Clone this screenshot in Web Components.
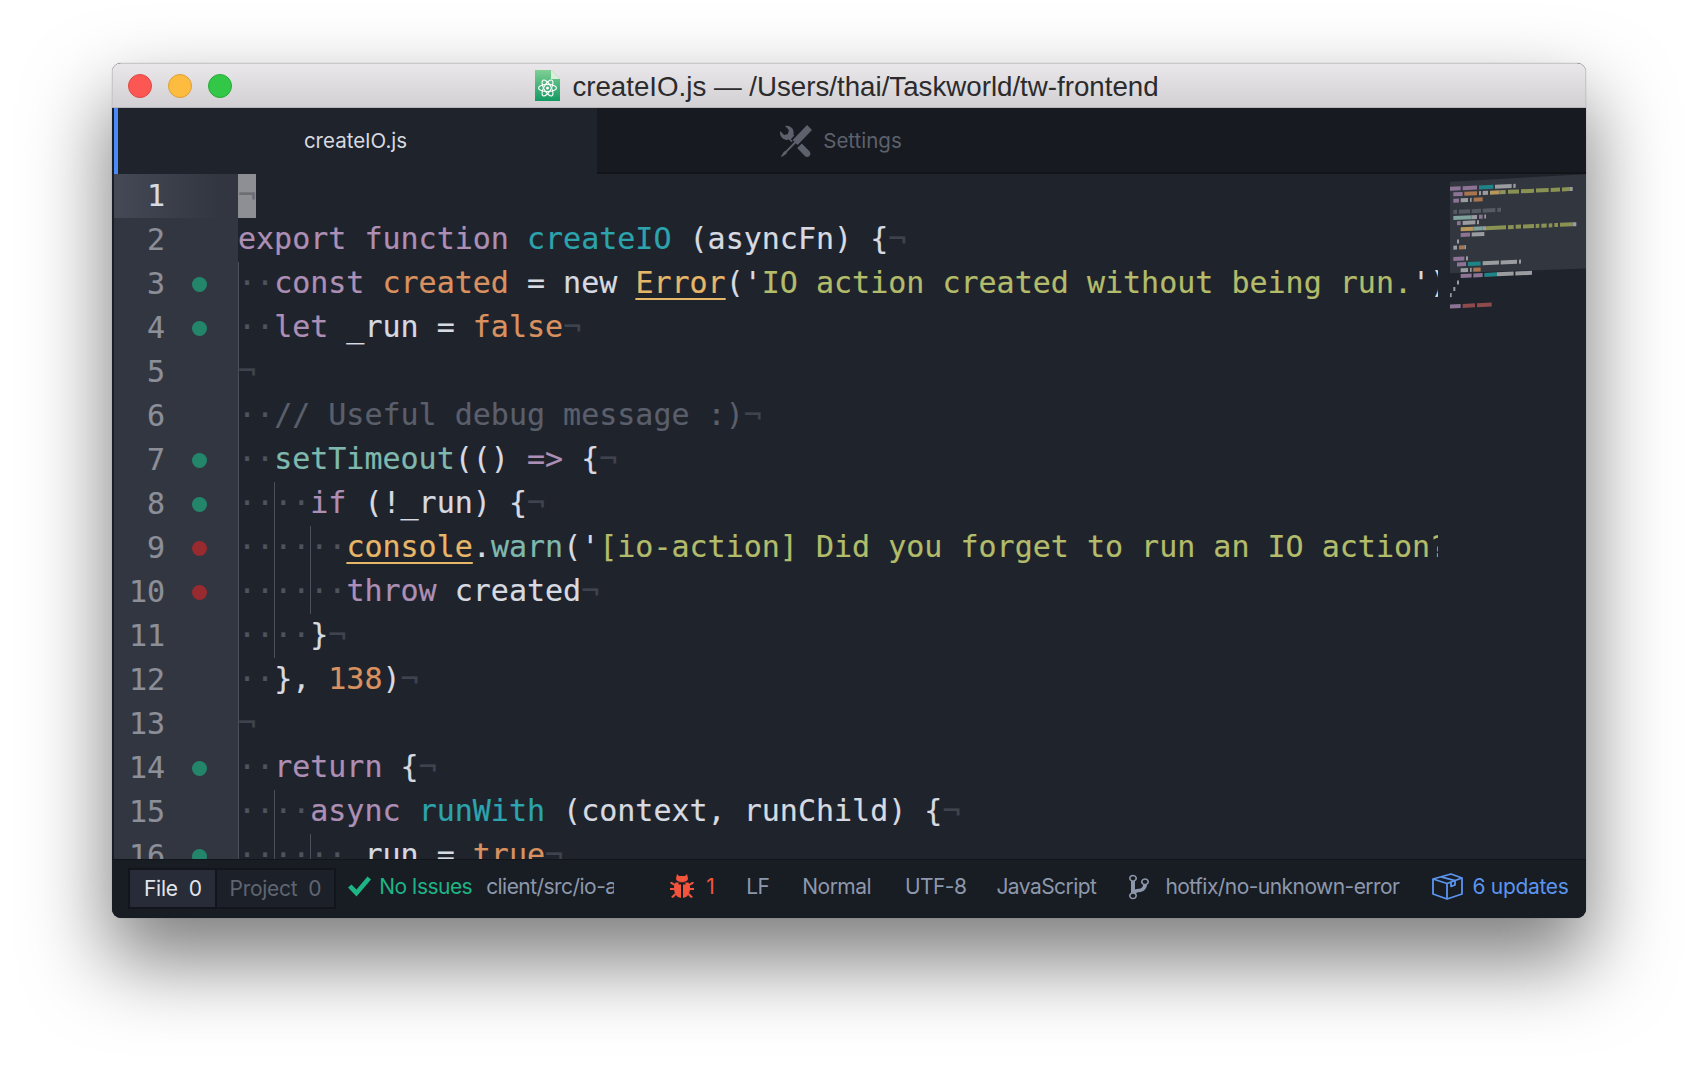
<!DOCTYPE html>
<html>
<head>
<meta charset="utf-8">
<title>createIO.js</title>
<style>
    html, body { margin: 0; height: 100%; background: #fff; overflow: hidden; }
    body { padding: 63px 0 0 112px; box-sizing: border-box; font-family: Inter, "Liberation Sans", sans-serif; }
</style>
</head>
<body>
<app-window>
    <title-bar slot="title">createIO.js — /Users/thai/Taskworld/tw-frontend</title-bar>
    <tab-bar slot="tabs">
        <tab-item active>createIO.js</tab-item>
        <tab-item icon>Settings</tab-item>
    </tab-bar>
    <text-editor slot="editor"></text-editor>
    <status-bar slot="status"></status-bar>
</app-window>

<script>
class AppWindow extends HTMLElement {
    constructor() {
        super();
        this.attachShadow({ mode: 'open' });
        this.shadowRoot.innerHTML = `
            <style>
                :host {
                    display: flex;
                    flex-direction: column;
                    width: 1474px;
                    height: 855px;
                    border-radius: 9px;
                    overflow: hidden;
                    background: #1f232c;
                    box-shadow: 0 40px 80px 4px rgba(0, 0, 0, 0.5), 0 0 1px rgba(0, 0, 0, 0.4);
                }
            </style>
            <slot name="title"></slot>
            <slot name="tabs"></slot>
            <slot name="editor"></slot>
            <slot name="status"></slot>
        `;
    }
}

class TitleBar extends HTMLElement {
    constructor() {
        super();
        this.attachShadow({ mode: 'open' });
        this.shadowRoot.innerHTML = `
            <style>
                :host {
                    display: flex;
                    position: relative;
                    flex: none;
                    height: 45px;
                    box-sizing: border-box;
                    align-items: center;
                    justify-content: center;
                    background: linear-gradient(#e9e7e9, #d2d0d2);
                    border-top: 1px solid #c9c8c9;
                    border-bottom: 1px solid #b8b6b8;
                    box-shadow: inset 1px 0 0 #c9c8c9, inset -1px 0 0 #c9c8c9;
                    color: #2b2b2d;
                    font: 27.7px "Liberation Sans", Arial, sans-serif;
                }
                .lights {
                    position: absolute;
                    left: 16px;
                    top: 10px;
                    display: flex;
                    gap: 16px;
                }
                .lights i {
                    width: 24px;
                    height: 24px;
                    border-radius: 50%;
                    box-sizing: border-box;
                }
                .close { background: #fc5753; border: 1px solid #df4744; }
                .min { background: #fdbc40; border: 1px solid #de9f34; }
                .max { background: #33c748; border: 1px solid #27aa35; }
                .inner { display: flex; align-items: center; gap: 12px; margin-left: -4px; }
                .text { position: relative; top: 1px; }
                svg { display: block; }
            </style>
            <div class="lights"><i class="close"></i><i class="min"></i><i class="max"></i></div>
            <div class="inner">
                <svg width="25" height="31" viewBox="0 0 25 31">
                    <defs>
                        <linearGradient id="doc" x1="0" y1="0" x2="0" y2="1">
                            <stop offset="0" stop-color="#7fcf94"/>
                            <stop offset="1" stop-color="#139a63"/>
                        </linearGradient>
                    </defs>
                    <path d="M0 0H16L25 9V31H0Z" fill="url(#doc)"/>
                    <path d="M16 0L25 9H16Z" fill="#d9efdc"/>
                    <g fill="none" stroke="#fff" stroke-width="1.1">
                        <ellipse cx="12.5" cy="18" rx="9" ry="3.6"/>
                        <ellipse cx="12.5" cy="18" rx="9" ry="3.6" transform="rotate(60 12.5 18)"/>
                        <ellipse cx="12.5" cy="18" rx="9" ry="3.6" transform="rotate(120 12.5 18)"/>
                    </g>
                    <circle cx="12.5" cy="18" r="1.5" fill="#fff"/>
                </svg>
                <span class="text"><slot></slot></span>
            </div>
        `;
    }
}

class TabBar extends HTMLElement {
    constructor() {
        super();
        this.attachShadow({ mode: 'open' });
        this.shadowRoot.innerHTML = `
            <style>
                :host {
                    display: flex;
                    flex: none;
                    height: 66px;
                    background: #171a21;
                    border-left: 2px solid #1a1d24;
                    box-shadow: inset 0 -2px 0 #12141a;
                }
            </style>
            <slot></slot>
        `;
    }
}

class TabItem extends HTMLElement {
    constructor() {
        super();
        this.attachShadow({ mode: 'open' });
        this.shadowRoot.innerHTML = `
            <style>
                :host {
                    display: flex;
                    width: 485px;
                    box-sizing: border-box;
                    align-items: center;
                    justify-content: center;
                    gap: 11px;
                    padding: 0 0 1px 3px;
                    color: #5d616c;
                    font-size: 20.5px;
                }
                :host([active]) {
                    width: 483px;
                    padding: 0 0 2px;
                    background: #1f232c;
                    color: #d7dae0;
                    box-shadow: inset 4px 0 0 #4a8cf7;
                }
                svg { display: none; }
                :host([icon]) svg { display: block; }
            </style>
            <svg width="32" height="32" viewBox="0 0 16 16" fill="#5d616c">
                <path d="M4.48 7.27c.26.26 1.28 1.33 1.28 1.33l.56-.58-.88-.91 1.69-1.8s-.76-.74-.43-.45c.32-1.19.03-2.51-.87-3.44C4.93.5 3.66.2 2.52.51l1.93 2-.51 1.96-1.89.52-1.93-2C-.19 4.17.1 5.48 1 6.4c.94.98 2.29 1.26 3.48.87zm6.44 1.94l-2.33 2.3 3.84 3.98c.31.33.73.49 1.14.49.41 0 .82-.16 1.14-.49.63-.65.63-1.7 0-2.35l-3.79-3.93zM16 2.53L13.55 0 6.33 7.46l.88.91-4.31 4.46-.99.53-1.39 2.27.35.37 2.2-1.44.51-1.02L7.9 9.08l.88.91L16 2.53z"/>
            </svg>
            <slot></slot>
        `;
    }
}

// one entry per editor row: gutter mark, indent guides, indent dots, tokens
const LINES = [
    { cursor: true },
    { t: [['kw', 'export function '], ['fn', 'createIO'], ['', ' (asyncFn) {']] },
    { m: 'g', ind: 1, g: [0], t: [['kw', 'const '], ['or', 'created'], ['', ' = new '], ['err', 'Error'], ['', "('"], ['st', 'IO action created without being run.'], ['', "')"]], noeol: true },
    { m: 'g', ind: 1, g: [0], t: [['kw', 'let'], ['', ' _run = '], ['or', 'false']] },
    { g: [0] },
    { ind: 1, g: [0], t: [['cm', '// Useful debug message :)']] },
    { m: 'g', ind: 1, g: [0], t: [['sup', 'setTimeout'], ['', '(() '], ['kw', '=>'], ['', ' {']] },
    { m: 'g', ind: 2, g: [0, 1], t: [['kw', 'if'], ['', ' (!_run) {']] },
    { m: 'r', ind: 3, g: [0, 1, 2], t: [['err', 'console'], ['', '.'], ['sup', 'warn'], ['', "('"], ['st', '[io-action] Did you forget to run an IO action?'], ['', "')"]], noeol: true },
    { m: 'r', ind: 3, g: [0, 1, 2], t: [['kw', 'throw'], ['', ' created']] },
    { ind: 2, g: [0, 1], t: [['', '}']] },
    { ind: 1, g: [0], t: [['', '}, '], ['or', '138'], ['', ')']] },
    { g: [0] },
    { m: 'g', ind: 1, g: [0], t: [['kw', 'return'], ['', ' {']] },
    { ind: 2, g: [0, 1], t: [['kw', 'async '], ['fn', 'runWith'], ['', ' (context, runChild) {']] },
    { m: 'g', ind: 3, g: [0, 1, 2], t: [['', ' run = '], ['or', 'true']] }
];

// minimap rows, in 1/3 px of the svg: y at x=340, then [x, width, colour] runs
const P = '#8d7396', T = '#1f8488', G = '#9a9ca0', O = '#a8754f', Y = '#b7975c', L = '#8a9253', D = '#565a62', S = '#7fa39c', R = '#8f4a4c';
const MINI = [
    [116, [[330, 32, P], [368, 43, P], [417, 43, T], [465, 50, G], [520, 7, G]]],
    [133, [[340, 28, P], [373, 38, O], [417, 6, G], [428, 16, G], [450, 28, Y], [478, 19, '#8f9160'], [504, 33, L], [543, 39, L], [588, 38, L], [632, 28, L], [666, 22, L], [688, 10, G]]],
    [152, [[340, 17, P], [362, 22, G], [390, 5, G], [401, 27, O]]],
    [186, [[340, 11, D], [357, 33, D], [395, 28, D], [428, 38, D], [472, 11, D]]],
    [204, [[340, 55, S], [395, 16, G], [417, 11, P], [433, 5, G]]],
    [220, [[351, 11, P], [368, 38, G], [411, 6, G]]],
    [239, [[362, 39, Y], [401, 27, S], [428, 10, G], [438, 60, L], [504, 17, L], [527, 16, L], [549, 33, L], [587, 11, L], [604, 16, L], [626, 11, L], [643, 11, L], [660, 38, L], [698, 11, G]]],
    [256, [[362, 28, P], [395, 38, G]]],
    [275, [[351, 6, G]]],
    [293, [[340, 11, G], [357, 16, O], [373, 5, G]]],
    [327, [[340, 33, P], [378, 6, G]]],
    [344, [[351, 27, P], [384, 38, T], [428, 49, G], [482, 49, G], [537, 6, G]]],
    [362, [[362, 22, G], [390, 5, G], [400, 22, O]]],
    [379, [[362, 33, P], [400, 28, P], [433, 38, T], [471, 50, G], [526, 50, G]]],
    [398, [[351, 6, G]]],
    [417, [[340, 6, G]]],
    [435, [[330, 5, G]]],
    [469, [[330, 32, P], [368, 37, R], [411, 44, R]]]
];

class TextEditor extends HTMLElement {
    constructor() {
        super();
        this.attachShadow({ mode: 'open' });
        this.render();
    }

    renderLine(line, i) {
        const dot = line.m ? `<i class="mark ${line.m}"></i>` : '';
        let code = '';
        if (line.cursor) {
            code = '<span class="cursor"><span class="eol">¬</span></span>';
        } else {
            for (let n = 0; n < (line.ind || 0); n++) {
                const guide = line.g.includes(n) && n > 0 ? ' guide' : '';
                code += `<span class="indent${guide}">··</span>`;
            }
            code += (line.t || []).map(([c, s]) => `<span class="${c}">${s}</span>`).join('');
            if (!line.noeol) code += '<span class="eol">¬</span>';
        }
        const edge = line.g && line.g.includes(0) ? ' edge' : '';
        return `
            <div class="row${i === 0 ? ' current' : ''}">
                <div class="gutter"><span class="num">${i + 1}</span>${dot}</div>
                <div class="code${edge}">${code}</div>
            </div>`;
    }

    renderMinimap() {
        let rects = '';
        MINI.forEach(([y, runs]) => {
            runs.forEach(([x, w, c]) => {
                const y1 = y - 0.045 * (x - 340);
                const y2 = y - 0.045 * (x + w - 340);
                rects += `<path d="M${x} ${y1 - 6}L${x + w} ${y2 - 6}V${y2 + 6}L${x} ${y1 + 6}Z" fill="${c}"/>`;
            });
        });
        return `
            <svg class="minimap" width="250" height="170" viewBox="0 0 750 510">
                <path d="M330 95L750 72V355L330 370Z" fill="#32363f"/>
                ${rects}
            </svg>`;
    }

    render() {
        this.shadowRoot.innerHTML = `
            <style>
                :host {
                    display: block;
                    position: relative;
                    flex: 1;
                    min-height: 0;
                    overflow: hidden;
                    background: #1f232c;
                    border-left: 2px solid #1a1d24;
                    color: #d7dae0;
                    font: 30px/42px "DejaVu Sans Mono", monospace;
                    -webkit-text-stroke: 0.2px;
                }
                .row { display: flex; height: 44px; }
                .gutter {
                    display: flex;
                    flex: none;
                    width: 124px;
                    align-items: center;
                    background: #323641;
                    color: #8c8f98;
                }
                .current .gutter {
                    background: linear-gradient(90deg, #444955, #323641 85%);
                    color: #d7dae0;
                }
                .num { width: 51px; text-align: right; }
                .mark {
                    width: 15px;
                    height: 15px;
                    margin-left: 27px;
                    border-radius: 50%;
                }
                .mark.g { background: #23866b; }
                .mark.r { background: #972b2f; }
                .code {
                    width: 1200px;
                    overflow: hidden;
                    white-space: pre;
                }
                .edge { box-shadow: inset 1px 0 0 #4b4f5a; }
                .indent {
                    display: inline-block;
                    height: 44px;
                    vertical-align: top;
                    color: #4f535d;
                }
                .guide { box-shadow: inset 1px 0 0 #4b4f5a; }
                .eol { color: #3f434e; }
                .cursor { display: inline-block; height: 44px; vertical-align: top; background: #8e8f94; }
                .cursor .eol { color: #6d6e74; }
                .kw { color: #ad8fb5; }
                .fn { color: #2ca3ad; }
                .or { color: #da9160; }
                .st { color: #b3bc6a; }
                .cm { color: #5a5f6b; }
                .sup { color: #7fb9ae; }
                .err { color: #e6b768; text-decoration: underline; text-underline-offset: 5px; text-decoration-thickness: 2px; text-decoration-skip-ink: none; }
                .minimap { position: absolute; left: 1226px; top: -24px; }
            </style>
            ${LINES.map((l, i) => this.renderLine(l, i)).join('')}
            ${this.renderMinimap()}
        `;
    }
}

class StatusBar extends HTMLElement {
    constructor() {
        super();
        this.attachShadow({ mode: 'open' });
        this.shadowRoot.innerHTML = `
            <style>
                :host {
                    display: flex;
                    flex: none;
                    height: 59px;
                    box-sizing: border-box;
                    align-items: center;
                    background: #181c23;
                    border-top: 1px solid #12151a;
                    color: #8d98ac;
                    font-size: 21px;
                    letter-spacing: -0.55px;
                    white-space: nowrap;
                }
                svg { display: block; flex: none; }
                .tabs {
                    display: flex;
                    gap: 2px;
                    margin: -1px 0 0 16px;
                    padding: 2px;
                    background: #12151b;
                    letter-spacing: -0.3px;
                }
                .tabs span { display: flex; height: 37px; align-items: center; gap: 11px; }
                .tabs b { font-weight: 400; }
                .file { background: #272c38; color: #e3e5ea; padding: 0 13px 0 14px; }
                .project { background: #1c2029; color: #5f6570; padding: 0 13px; }
                .ok { display: flex; align-items: center; gap: 8px; margin: -5px 0 0 12px; color: #1eb585; }
                .path { width: 128px; overflow: hidden; margin: -5px 0 0 14px; }
                .bug { display: flex; align-items: center; gap: 12px; margin: -5px 0 0 56px; color: #f2553c; }
                .item { margin-top: -5px; }
                .branch { display: flex; align-items: center; gap: 16px; margin: -5px 0 0 33px; }
                .updates { display: flex; align-items: center; gap: 9px; margin: -5px 0 0 33px; color: #5b95f0; letter-spacing: -0.3px; }
            </style>
            <div class="tabs">
                <span class="file">File <b>0</b></span>
                <span class="project">Project <b>0</b></span>
            </div>
            <div class="ok">
                <svg width="23" height="21" viewBox="0 0 23 21"><path d="M0 11.5L3.5 8.5L8.5 13.5L19.5 0.5L23 3.5L8.5 20.5Z" fill="#1eb585"/></svg>
                <span>No Issues</span>
            </div>
            <div class="path">client/src/io-a</div>
            <div class="bug">
                <svg width="24" height="27" viewBox="0 0 24 27" fill="#f2553c">
                    <path d="M7 1L9 3H15L17 1L18 5.5C18 7.5 16 9 12 9S6 7.5 6 5.5Z"/>
                    <path d="M5.5 9.5H18.5C19.5 11 20 13 20 15C20 21 17 25 12 25S4 21 4 15C4 13 4.5 11 5.5 9.5Z"/>
                    <path d="M0 9H2L5 11V13L1 11ZM24 9H22L19 11V13L23 11ZM0 15H4V17H0ZM24 15H20V17H24ZM1 24L5 20L6 22L3 25ZM23 24L19 20L18 22L21 25Z"/>
                    <path d="M11 10H13V25H11Z" fill="#181c23"/>
                    <path d="M8.5 9.5H15.5V11.5H8.5Z" fill="#181c23"/>
                </svg>
                <span>1</span>
            </div>
            <div class="item" style="margin-left:32px">LF</div>
            <div class="item" style="margin-left:33px">Normal</div>
            <div class="item" style="margin-left:34px">UTF-8</div>
            <div class="item" style="margin-left:30px">JavaScript</div>
            <div class="branch">
                <svg width="20" height="28" viewBox="0 0 10 16" fill="#8d98ac" preserveAspectRatio="none">
                    <path d="M10 5c0-1.11-.89-2-2-2a1.993 1.993 0 0 0-1 3.72v.3c-.02.52-.23.98-.63 1.38-.4.4-.86.61-1.38.63-.83.02-1.48.16-2 .45V4.72a1.993 1.993 0 0 0-1-3.72C.88 1 0 1.89 0 3a2 2 0 0 0 1 1.72v6.56c-.59.35-1 .99-1 1.72 0 1.11.89 2 2 2 1.11 0 2-.89 2-2 0-.53-.2-1-.53-1.36.09-.06.48-.41.59-.47.25-.11.56-.17.94-.17 1.05-.05 1.95-.45 2.75-1.25S8.95 7.77 9 6.73h-.02C9.59 6.37 10 5.73 10 5zM2 1.8c.66 0 1.2.55 1.2 1.2 0 .65-.55 1.2-1.2 1.2C1.35 4.2.8 3.65.8 3c0-.65.55-1.2 1.2-1.2zm0 12.41c-.66 0-1.2-.55-1.2-1.2 0-.65.55-1.2 1.2-1.2.65 0 1.2.55 1.2 1.2 0 .65-.55 1.2-1.2 1.2zm6-8c-.66 0-1.2-.55-1.2-1.2 0-.65.55-1.2 1.2-1.2.65 0 1.2.55 1.2 1.2 0 .65-.55 1.2-1.2 1.2z"/>
                </svg>
                <span>hotfix/no-unknown-error</span>
            </div>
            <div class="updates">
                <svg width="31" height="27" viewBox="0 0 31 27" fill="none" stroke="#5b95f0" stroke-width="1.8" stroke-linejoin="round">
                    <path d="M1 6L19 1L30 5V21L15 26L1 21Z"/>
                    <path d="M1 6L15 10.5L30 5M15 10.5V26"/>
                    <path d="M9 3.8L23 7.7V12L19 13.3V9"/>
                </svg>
                <span>6 updates</span>
            </div>
        `;
    }
}

customElements.define('app-window', AppWindow);
customElements.define('title-bar', TitleBar);
customElements.define('tab-bar', TabBar);
customElements.define('tab-item', TabItem);
customElements.define('text-editor', TextEditor);
customElements.define('status-bar', StatusBar);
</script>
</body>
</html>
